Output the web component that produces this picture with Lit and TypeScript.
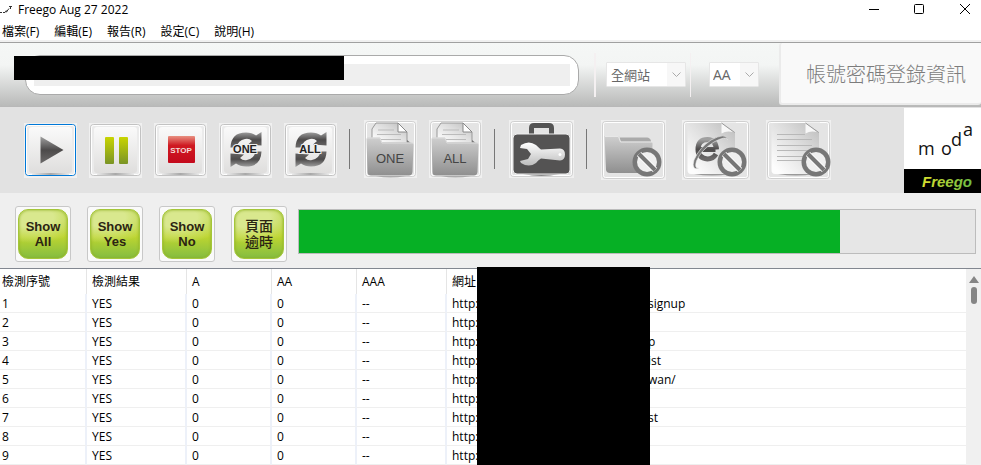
import { LitElement, html, css, svg } from "lit";
import { customElement } from "lit/decorators.js";

const defs = svg`<defs>
  <linearGradient id="face" x1="0" y1="0" x2="0" y2="1"><stop offset="0" stop-color="#fafafa"/><stop offset="1" stop-color="#dfdedd"/></linearGradient>
  <linearGradient id="dark" x1="0" y1="0" x2="0" y2="1"><stop offset="0" stop-color="#a0a0a0"/><stop offset=".5" stop-color="#4c4a4a"/><stop offset="1" stop-color="#6c6a6a"/></linearGradient>
  <linearGradient id="lime" x1="0" y1="0" x2="0" y2="1"><stop offset="0" stop-color="#c8d400"/><stop offset="1" stop-color="#7a9426"/></linearGradient>
  <linearGradient id="red" x1="0" y1="0" x2="0" y2="1"><stop offset="0" stop-color="#e89080"/><stop offset=".35" stop-color="#cf1a22"/><stop offset="1" stop-color="#c40a1c"/></linearGradient>
  <linearGradient id="folder" x1="0" y1="0" x2="0" y2="1"><stop offset="0" stop-color="#cfcfcf"/><stop offset="1" stop-color="#8f8f8f"/></linearGradient>
  <linearGradient id="page" x1="1" y1="0" x2="0" y2="1"><stop offset="0" stop-color="#bcbcbc"/><stop offset=".4" stop-color="#dcdcdc"/><stop offset=".9" stop-color="#fdfdfd"/></linearGradient>
  <linearGradient id="metal" x1="0" y1="0" x2="0" y2="1"><stop offset="0" stop-color="#ffffff"/><stop offset="1" stop-color="#bdbdbd"/></linearGradient>
  <linearGradient id="shade" x1="0" y1="0" x2="1" y2="0"><stop offset="0" stop-color="#e8e8e8"/><stop offset=".5" stop-color="#a8a8a8"/><stop offset="1" stop-color="#e8e8e8"/></linearGradient>
</defs>`;

const plate = (focused = false) => svg`
  <rect width="53" height="55" fill="#f0f0f0"/>
  <rect x="1.5" y="1.5" width="50" height="51" rx="3" fill="#ebebeb" stroke=${focused ? "#0078d7" : "#c2c2c2"}/>
  <rect x="2.5" y="2.5" width="48" height="49" rx="2" fill="none" stroke="#fff"/>
  <rect x="8" y="50" width="37" height="2" fill="url(#shade)"/>
  <rect x="5" y="4" width="43" height="46" rx="3" fill="url(#face)"/>`;

const frame = (w: number, h: number) => svg`
  <rect width=${w} height=${h} fill="#f0f0f0"/>
  <rect x="1.5" y="1.5" width=${w - 3} height=${h - 3} rx="3" fill="#e4e4e4" stroke="#d0d0d0"/>
  <rect x="2.5" y="2.5" width=${w - 5} height=${h - 5} rx="2" fill="none" stroke="#fff"/>`;

const ban = (cx: number, cy: number) => svg`
  <circle cx=${cx} cy=${cy} r="14.5" fill="#777"/>
  <circle cx=${cx} cy=${cy} r="10" fill="#efefef"/>
  <path d=${`M${cx - 8} ${cy - 8}L${cx + 8} ${cy + 8}`} stroke="#fff" stroke-width="6"/>
  <path d=${`M${cx - 8} ${cy - 8}L${cx + 8} ${cy + 8}`} stroke="#777" stroke-width="4"/>`;

const half = "M11.5 24.500Q12 9.500 27 9.500Q33 9.500 37 12.500L42.500 9V22.500L29 21.500L33 18Q30 15 26 16Q19 17 17.500 24.500Z";
const cycle = (label: string) => svg`${plate()}
  <path d=${half} fill="url(#dark)"/>
  <path d=${half} fill="url(#dark)" transform="rotate(180 27 26.5)"/>
  <text x="26" y="30" text-anchor="middle" class="cycle-label">${label}</text>`;

const folderWith = (label: string) => svg`${frame(53, 58)}
  <path d="M12 3H34L43 12V23H8V9Z" fill="url(#page)" stroke="#999"/>
  <path d="M34 3V12H43Z" fill="#fff" stroke="#888"/>
  <path d="M14 10H30M13 14.500H37M12 19.500H37" stroke="#bbb"/>
  <path d="M43 20L48 24H43Z" fill="#777"/>
  <path d="M12 56Q26 59 42 56Z" fill="#aaa"/>
  <path d="M2.500 19Q2.500 17.500 4 17.500H16L18 22.500H47Q49.500 22.500 49.500 25L48.500 52Q48 55.500 45 55.500H7Q3.500 55.500 3.500 52Z" fill="url(#folder)"/>
  <path d="M3 18H16L18 23H49" fill="none" stroke="#dedede"/>
  <text x="26" y="43" text-anchor="middle" class="folder-label">${label}</text>`;

const pageShape = svg`
  <path d="M12 54Q30 57 48 54Z" fill="#999"/>
  <path d="M9 3H40L53 12V51Q53 54 50 54H9Q5.500 54 5.500 50V7Q5.500 3 9 3Z" fill="url(#page)"/>
  <path d="M39 2.500H54V12Z" fill="#e4e4e4"/>
  <path d="M39.500 3L52.500 12.500Q45 10 39.500 13.500Z" fill="#f8f8f8"/>
  <path d="M39.500 3L52.500 12.500" stroke="#999" fill="none"/>`;

const icons = {
  play: svg`${plate(true)}<path d="M16.500 13.500L39.500 27L16.500 40.500Z" fill="url(#dark)"/>`,
  pause: svg`${plate()}<rect x="16" y="14" width="9" height="27" rx="1" fill="url(#lime)"/><rect x="30" y="14" width="9" height="27" rx="1" fill="url(#lime)"/>`,
  stop: svg`${plate()}<rect x="14" y="13" width="27" height="27" rx="1" fill="url(#red)"/><text x="27" y="30" text-anchor="middle" class="stop-label">STOP</text>`,
  toolbox: svg`${frame(65, 58)}
    <path d="M22.500 14V8Q22.500 5.500 25 5.500H40Q42.500 5.500 42.500 8V14" fill="none" stroke="#555" stroke-width="5"/>
    <path d="M14 54Q32 58 51 54Z" fill="#888"/>
    <rect x="4" y="14" width="57" height="40" rx="4" fill="#545353" stroke="#eee"/>
    <path d="M12 25Q20 20 27 25Q30 28 32 29.500L51 28.500Q56 29 56 34.500Q56 40 51 40.500L32 38.500Q29 40 27 43Q20 48 12 43L11 41L19 39L22 34L18 29L11 28Z" fill="url(#metal)"/>
    <circle cx="51" cy="34.500" r="1.500" fill="#fff"/>`,
  noFolder: svg`${frame(65, 60)}
    <path d="M19 17.500H46Q49 17.500 50 21V30H19Z" fill="#aaa"/>
    <path d="M3.500 16H18L20 21.500H49Q52 21.500 51.500 25L50 50Q50 53 47 53H9Q5.500 53 5 50Z" fill="url(#folder)"/>
    <path d="M4 16.500H17.500L19.500 22H51" fill="none" stroke="#e8e8e8"/>
    ${ban(46, 42)}`,
  noBrowser: svg`${frame(68, 60)}${pageShape}
    <path d="M16 29.500H33.500M34 34Q31 39 25.500 39Q16 38 16 29.500Q16 19.500 25.500 19.500Q34 20 34.500 29.500" fill="none" stroke="url(#dark)" stroke-width="5"/>
    <path d="M17 48Q9 51 12 40Q17 28 29 20Q44 12 45.500 19.500Q44 15.500 32 22Q19 30 14.500 41Q12 49 17 48Z" fill="#777" stroke="#f0f0f0" stroke-width=".6"/>
    ${ban(50, 42)}`,
  noPage: svg`${frame(65, 60)}${pageShape}
    <path d="M11 14.500H39M11 19.500H46M11 25.500H46M11 30.500H46M11 36.500H46M11 40.500H40" stroke="#b8b8b8"/>
    ${ban(50, 42)}`,
};

const tool = (name: string, w: number, h: number, art: unknown) => html`
  <button class="tool" aria-label=${name}>
    <svg width=${w} height=${h} viewBox="0 0 ${w} ${h}">${defs}${art}</svg>
  </button>`;

const chevron = html`<svg class="chevron" width="9" height="6" viewBox="0 0 9 6"><path d="M.5 .5L4.500 4.500L8.500 .5" fill="none" stroke="#aaa"/></svg>`;

@customElement("app-root")
export class AppRoot extends LitElement {
  static styles = css`
    :host { display: block; color: #000; background: #efefef; font: 12px/18px "Open Sans", "Noto Sans CJK TC", sans-serif; }
    * { box-sizing: border-box; }
    button { font: inherit; color: inherit; padding: 0; border: 0; background: none; display: block; }
    svg { display: block; }
    .titlebar { display: flex; align-items: center; height: 20px; background: #fff; gap: 6px; }
    .title { flex: 1; }
    .window-buttons { display: flex; gap: 24px; padding-right: 5px; }
    .menu { display: flex; gap: 15px; height: 23px; padding: 2px 2px 0; background: #fff; border-bottom: 1px solid #a0a0a0; box-shadow: inset 0 -2px #f0f0f0; }
    .address { display: flex; height: 63px; position: relative; background: linear-gradient(#f5f7f6, #f3f5f4 35%, #b9bab9); }
    .address-main { flex: 1; display: flex; align-items: center; padding: 0 20px 0 25px; }
    .field { flex: 1; height: 40px; padding: 8px; background: #fff; border: 1px solid #aaa; border-radius: 15px; }
    .field input { display: block; width: 100%; height: 22px; border: 0; background: #efefef; font: inherit; }
    .rule { width: 2px; height: 44px; background: #f4f0f1; }
    .rule-first { margin: 0 10px 0 15px; }
    .rule-second { margin: 0 18px 0 4px; width: 1px; }
    .combo { position: relative; }
    .combo select { appearance: none; display: block; height: 25px; width: 80px; padding: 0 4px; border: 1px solid #e6e6e6; border-radius: 1px; color: #666; background: linear-gradient(to left, #f7f7f7 18px, #fff 18px); font: 13px "Open Sans", "Noto Sans CJK TC", sans-serif; }
    .combo .level { width: 50px; padding: 0 3px; font-size: 14px; }
    .chevron { position: absolute; right: 5px; top: 10px; pointer-events: none; }
    .account { width: 202px; height: 62px; padding: 4px 0 0 10px; border: 2px solid #ebebeb; border-width: 0 0 2px 2px; border-radius: 3px; background: #f9f9f9; color: #7c7c7c; font-size: 20px; font-weight: 300; }
    .mask { position: absolute; background: #000; }
    .mask-address { left: 14px; top: 13px; width: 330px; height: 24px; }
    .toolbar { display: flex; justify-content: space-between; align-items: flex-end; height: 87px; background: #e2e2e2; box-shadow: inset 0 1px #b8b8b8; }
    .tools { display: flex; align-items: flex-end; padding: 0 0 15px 24px; }
    .tools-run, .tools-report { display: flex; align-items: flex-end; gap: 12px; }
    .tools-off { display: flex; gap: 16px; margin-bottom: -2px; }
    .divider { width: 1px; height: 40px; margin: 0 14px 9px 12px; background: #777; }
    .brand { width: 77px; height: 85px; background: #fff; }
    .cycle-label { font: bold 11px "Liberation Sans Narrow", "Liberation Sans", sans-serif; fill: #222; stroke: #eee; stroke-width: 2px; paint-order: stroke; }
    .folder-label { font: 13px "Liberation Sans", sans-serif; fill: #444; }
    .stop-label { font: bold 8px "Liberation Sans", sans-serif; fill: #f5dcd8; }
    .moda { font: 18px "Open Sans", sans-serif; fill: #111; }
    .freego { font: italic bold 15px "Liberation Sans", sans-serif; fill: url(#brand-lime); }
    .filters { display: flex; align-items: flex-start; height: 76px; padding: 13px 5px 0 15px; gap: 16px; border-bottom: 1px solid #828790; }
    .filter { width: 56px; height: 56px; padding: 2px; border: 1px solid #c8c8c8; border-radius: 3px; background: #fafafa; }
    .filter span { display: flex; align-items: center; justify-content: center; height: 50px; border-radius: 10px; border: 1px solid #a4c639; color: #2b2413; font: bold 13px/15px "Liberation Sans Narrow", "Liberation Sans", "Noto Sans CJK TC", sans-serif; background: radial-gradient(ellipse 50px 26px at 30% 15%, #d9e88e 40%, #d9e88e00 100%), linear-gradient(#b4d23c, #bdd530 55%, #84bd41); box-shadow: inset 0 0 3px #8fae24; }
    .filter .cjk { font-size: 14px; line-height: 16px; font-weight: 500; }
    .progress { flex: 1; height: 45px; margin: 3px 0 0 -5px; border: 1px solid #bcbcbc; background: #e6e6e6; }
    .bar { height: 100%; background: #06b025; }
    .results { display: flex; position: relative; background: #fff; }
    table { flex: 1; table-layout: fixed; width: 0; border-spacing: 0; }
    th, td { padding: 0 0 0 5px; text-align: left; font-weight: 400; white-space: nowrap; }
    th { height: 25px; border-right: 1px solid #e5e5e5; }
    td { height: 19px; padding-top: 2px; line-height: 16px; border-right: 2px solid #edf1f9; border-bottom: 1px solid #efefef; }
    th:first-child, td:first-child { padding-left: 2px; }
    th:last-child, td:last-child { border-right: 0; }
    .c-id { width: 87px; } .c-result { width: 100px; } .c-level { width: 85px; } .c-aaa { width: 90px; }
    .host { display: inline-block; width: 196px; }
    .mask-urls { left: 477px; top: -2px; bottom: 0; width: 173px; }
    .scroll { width: 15px; background: #f0f0f0; display: flex; flex-direction: column; align-items: center; gap: 4px; padding-top: 7px; }
    .thumb { width: 6px; height: 17px; border-radius: 3px; background: #858585; }
  `;

  private menus = ["檔案(F)", "編輯(E)", "報告(R)", "設定(C)", "說明(H)"];
  private tails = ["signup", "", "p", "ist", "wan/", "", "st", "", ""];
  private progress = 80;

  render() {
    return html`
      <header class="titlebar">
        <svg width="12" height="16" viewBox="0 0 12 16"><path d="M0 10.500H2M3 10.500H5M5 9.500L8 8.500M6 10.500L9 6.500M9 4.500H12M10.500 4V7" stroke="#333" fill="none"/></svg>
        <span class="title">Freego Aug 27 2022</span>
        <div class="window-buttons">
          <button aria-label="Minimize"><svg width="22" height="18" viewBox="0 0 22 18"><path d="M7 8.500H17" stroke="#000"/></svg></button>
          <button aria-label="Maximize"><svg width="22" height="18" viewBox="0 0 22 18"><rect x="6.500" y="3.500" width="9" height="9" rx="1" fill="none" stroke="#000"/></svg></button>
          <button aria-label="Close"><svg width="22" height="18" viewBox="0 0 22 18"><path d="M6 3L16 13M16 3L6 13" stroke="#000"/></svg></button>
        </div>
      </header>
      <nav class="menu">${this.menus.map((m) => html`<button>${m}</button>`)}</nav>
      <section class="address">
        <div class="address-main">
          <div class="field"><input type="text" aria-label="網址" /></div>
          <div class="rule rule-first"></div>
          <div class="combo"><select aria-label="範圍"><option>全網站</option></select>${chevron}</div>
          <div class="rule rule-second"></div>
          <div class="combo"><select class="level" aria-label="等級"><option>AA</option></select>${chevron}</div>
        </div>
        <button class="account">帳號密碼登錄資訊</button>
        <div class="mask mask-address"></div>
      </section>
      <section class="toolbar">
        <div class="tools">
          <div class="tools-run">
            ${tool("Play", 53, 55, icons.play)}${tool("Pause", 53, 55, icons.pause)}${tool("Stop", 53, 55, icons.stop)}
            ${tool("Repeat one", 53, 55, cycle("ONE"))}${tool("Repeat all", 53, 55, cycle("ALL"))}
          </div>
          <div class="divider"></div>
          <div class="tools-report">${tool("Report one", 53, 58, folderWith("ONE"))}${tool("Report all", 53, 58, folderWith("ALL"))}</div>
          <div class="divider"></div>
          ${tool("Settings", 65, 58, icons.toolbox)}
          <div class="divider"></div>
          <div class="tools-off">
            ${tool("No folder", 65, 60, icons.noFolder)}${tool("No browser", 68, 60, icons.noBrowser)}${tool("No page", 65, 60, icons.noPage)}
          </div>
        </div>
        <svg class="brand" width="77" height="85" viewBox="0 0 77 85">
          <defs><linearGradient id="brand-lime"><stop offset="0" stop-color="#d8df2e"/><stop offset="1" stop-color="#6dbb45"/></linearGradient></defs>
          <text class="moda"><tspan x="14" y="47">m</tspan><tspan x="37" y="47">o</tspan><tspan x="47" y="38">d</tspan><tspan x="59" y="28">a</tspan></text>
          <rect y="61" width="77" height="24" fill="#000"/>
          <text class="freego" x="18" y="79">Freego</text>
        </svg>
      </section>
      <section class="filters">
        <button class="filter"><span>Show<br />All</span></button>
        <button class="filter"><span>Show<br />Yes</span></button>
        <button class="filter"><span>Show<br />No</span></button>
        <button class="filter"><span class="cjk">頁面<br />逾時</span></button>
        <div class="progress" role="progressbar" aria-valuenow=${this.progress}><div class="bar" style="width:${this.progress}%"></div></div>
      </section>
      <section class="results">
        <table>
          <thead><tr>
            <th class="c-id">檢測序號</th><th class="c-result">檢測結果</th><th class="c-level">A</th><th class="c-level">AA</th><th class="c-aaa">AAA</th><th>網址</th>
          </tr></thead>
          <tbody>${this.tails.map((tail, i) => html`<tr>
            <td>${i + 1}</td><td>YES</td><td>0</td><td>0</td><td>--</td><td><span class="host">http:</span>${tail}</td>
          </tr>`)}</tbody>
        </table>
        <div class="scroll">
          <svg width="10" height="7" viewBox="0 0 10 7"><path d="M5 0L10 7H0Z" fill="#858585"/></svg>
          <div class="thumb"></div>
        </div>
        <div class="mask mask-urls"></div>
      </section>`;
  }
}
